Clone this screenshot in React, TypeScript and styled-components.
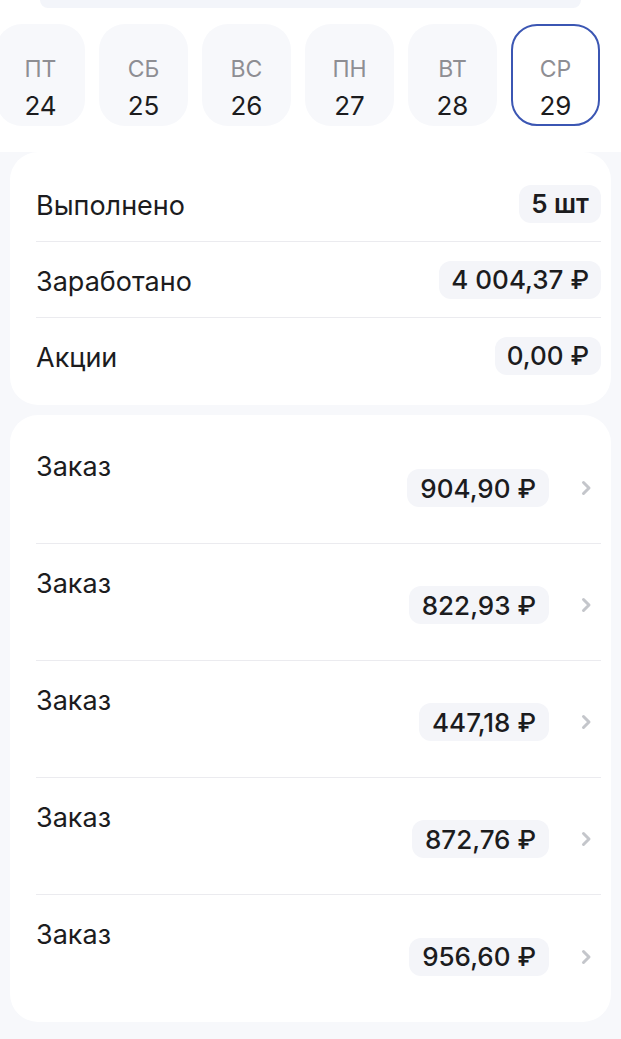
import * as React from 'react';
import styled, { createGlobalStyle } from 'styled-components';

const GlobalStyle = createGlobalStyle`
  html, body {
    margin: 0;
    padding: 0;
    background: #f7f8fb;
    font-family: Inter, "Noto Sans", "DejaVu Sans", sans-serif;
    color: #1c1c1e;
  }
`

const Page = styled.div`
  width: 621px;
  min-height: 1039px;
  background: #f7f8fb;
  overflow: hidden;
`

const Header = styled.div`
  background: #fff;
  padding-bottom: 26px;
`

const TopStrip = styled.div`
  height: 8px;
  margin: 0 40px;
  background: #f3f5fa;
  border-radius: 0 0 22px 22px;
`

const DaysRow = styled.div`
  display: flex;
  gap: 14px;
  margin-top: 16px;
  margin-left: -4px;
`

const DayChip = styled.div<{ $active?: boolean }>`
  flex: 0 0 89px;
  height: 102px;
  box-sizing: border-box;
  border-radius: 26px;
  background: ${p => (p.$active ? '#fff' : '#f7f8fb')};
  border: ${p => (p.$active ? '2.5px solid #3b56b3' : '2.5px solid transparent')};
  display: flex;
  flex-direction: column;
  align-items: center;
  justify-content: flex-end;
  gap: 6px;
  padding-bottom: 2px;
`

const DayName = styled.div`
  font-size: 23px;
  line-height: 30px;
  color: #8e8e93;
`

const DayNum = styled.div`
  font-size: 26px;
  line-height: 32px;
  color: #1c1c1e;
`

const Card = styled.div`
  background: #fff;
  border-radius: 28px;
  margin: 0 10px;
`

const SummaryCard = styled(Card)`
  padding: 14px 10px 12px 26px;
`

const SummaryRow = styled.div<{ $last?: boolean }>`
  display: flex;
  align-items: center;
  justify-content: space-between;
  height: 75px;
  border-bottom: ${p => (p.$last ? 'none' : '1.5px solid #ebebef')};
`

const Label = styled.div`
  font-size: 27px;
  padding-top: 4px;
  color: #1c1c1e;
`

const Pill = styled.div<{ $bold?: boolean }>`
  background: #f4f5f9;
  border-radius: 12px;
  height: 38px;
  padding: 0 12px;
  display: flex;
  align-items: center;
  font-size: 26px;
  font-weight: ${p => (p.$bold ? 600 : 500)};
  color: #1c1c1e;
`

const OrdersCard = styled(Card)`
  margin-top: 10px;
  padding: 12px 10px 10px 26px;
`

const OrderRow = styled.div<{ $last?: boolean }>`
  display: flex;
  align-items: center;
  height: 117px;
  box-sizing: border-box;
  border-bottom: ${p => (p.$last ? 'none' : '1.5px solid #ebebef')};
`

const OrderTitle = styled.div`
  flex: 1;
  font-size: 27px;
  padding-bottom: 38px;
  color: #1c1c1e;
`

const PricePill = styled(Pill)`
  margin-top: 6px;
  margin-right: 32px;
  padding: 0 13px;
`

const Chevron = styled.svg`
  margin-top: 6px;
  margin-right: 9px;
  flex: 0 0 auto;
`

const days = [
  { name: 'ПТ', num: 24 },
  { name: 'СБ', num: 25 },
  { name: 'ВС', num: 26 },
  { name: 'ПН', num: 27 },
  { name: 'ВТ', num: 28 },
  { name: 'СР', num: 29, active: true },
]

const summary = [
  { label: 'Выполнено', value: '5 шт', bold: true },
  { label: 'Заработано', value: '4 004,37 ₽' },
  { label: 'Акции', value: '0,00 ₽' },
]

const orders = ['904,90 ₽', '822,93 ₽', '447,18 ₽', '872,76 ₽', '956,60 ₽']

export default function App() {
  return (
    <Page>
      <GlobalStyle />
      <Header>
        <TopStrip />
        <DaysRow>
          {days.map(d => (
            <DayChip key={d.num} $active={d.active}>
              <DayName>{d.name}</DayName>
              <DayNum>{d.num}</DayNum>
            </DayChip>
          ))}
        </DaysRow>
      </Header>

      <SummaryCard>
        {summary.map((s, i) => (
          <SummaryRow key={s.label} $last={i === summary.length - 1}>
            <Label>{s.label}</Label>
            <Pill $bold={s.bold}>{s.value}</Pill>
          </SummaryRow>
        ))}
      </SummaryCard>

      <OrdersCard>
        {orders.map((price, i) => (
          <OrderRow key={price} $last={i === orders.length - 1}>
            <OrderTitle>Заказ</OrderTitle>
            <PricePill>{price}</PricePill>
            <Chevron width="11" height="16" viewBox="0 0 11 16">
              <path d="M2.5 2.5 L8 8 L2.5 13.5" fill="none" stroke="#c4c6cb" strokeWidth="3" strokeLinecap="round" strokeLinejoin="round" />
            </Chevron>
          </OrderRow>
        ))}
      </OrdersCard>
    </Page>
  );
}
